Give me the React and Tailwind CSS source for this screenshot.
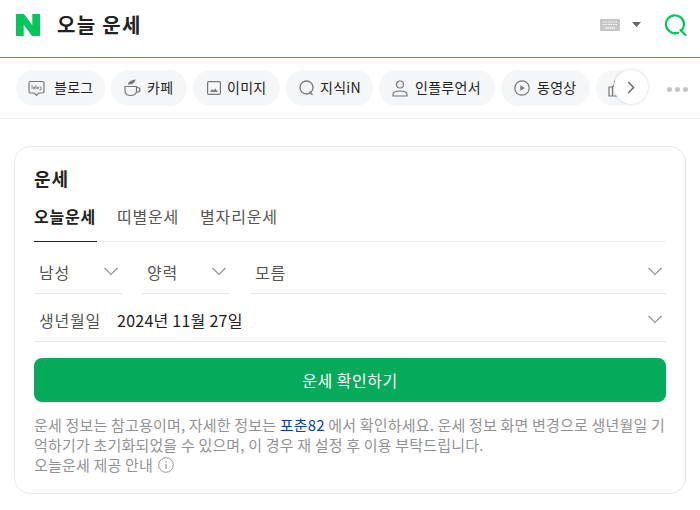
import React from "react";

const font = { fontFamily: '"Noto Sans CJK KR", "Liberation Sans", sans-serif' };

const Chevron = ({ className = "" }) => (
  <svg width="16" height="9" viewBox="0 0 16 9" fill="none" stroke="#8f9297" strokeWidth="1.2" className={className}>
    <path d="M1.5 1 L8 7.5 L14.5 1" />
  </svg>
);

const icons = {
  blog: (
    <svg width="17" height="17" viewBox="0 0 17 17" fill="none" stroke="#777" strokeWidth="1.2">
      <path d="M2.500 1.500h12a1.500 1.500 0 0 1 1.500 1.500v8.500a1.500 1.500 0 0 1-1.500 1.500h-3.700L8.500 15.300 6.200 13H2.500A1.500 1.500 0 0 1 1 11.500V3a1.500 1.500 0 0 1 1.500-1.500z" />
      <path d="M4 5v3.800M5.200 7h1.300v1.800H5.200zM7.800 5v3.800M9 7h1.300v1.800H9zM11.500 7h1.500v3h-1.500" strokeWidth="0.8" />
    </svg>
  ),
  cafe: (
    <svg width="17" height="18" viewBox="0 0 17 18" fill="none" stroke="#777" strokeWidth="1.2">
      <path d="M1 7.500h11.500v4.500a4.500 4.500 0 0 1-4.500 4.500H5.500A4.500 4.500 0 0 1 1 12z" />
      <path d="M12.500 8.500h1.200a2 2 0 0 1 0 4.500h-1.400" />
      <path d="M4 5.500c0-2.500 3-4.500 7.500-5-.3 3-3 5-7.500 5z" fill="#777" stroke="none" />
    </svg>
  ),
  image: (
    <svg width="14" height="14" viewBox="0 0 14 14" fill="none" stroke="#777" strokeWidth="1.200">
      <rect x="0.600" y="0.600" width="12.800" height="12.800" rx="1.200" />
      <path d="M3 11l2.200-3 1.500 1.800 1.500-2.400L11 11z" fill="#777" stroke="none" />
    </svg>
  ),
  kin: (
    <svg width="16" height="16" viewBox="0 0 16 16" fill="none" stroke="#777" strokeWidth="1.300">
      <circle cx="7.500" cy="7.500" r="6.500" />
      <path d="M10.500 11.500l3 3.500" />
    </svg>
  ),
  user: (
    <svg width="16" height="17" viewBox="0 0 16 17" fill="none" stroke="#777" strokeWidth="1.200">
      <circle cx="8" cy="4.500" r="3.500" />
      <path d="M1 16v-1.500c0-2 2-3.500 7-3.500s7 1.500 7 3.500V16z" />
    </svg>
  ),
  video: (
    <svg width="16" height="16" viewBox="0 0 16 16" fill="none" stroke="#777" strokeWidth="1.200">
      <circle cx="8" cy="8" r="7.200" />
      <path d="M6.300 5.200v5.600L10.800 8z" fill="#777" stroke="none" />
    </svg>
  ),
  thumb: (
    <svg width="17" height="17" viewBox="0 0 17 17" fill="none" stroke="#777" strokeWidth="1.200">
      <path d="M1 7h3.500v9H1zM4.500 7L7 4.500V1c1.500 0 2.500 1 2.500 2.500V6.500h5v9a.5.500 0 0 1-.5.500H4.500" />
    </svg>
  ),
};

const pills = [
  { label: "블로그", icon: "blog", cls: "w-[89px] pl-[11px] gap-[9px]" },
  { label: "카페", icon: "cafe", cls: "w-[76px] pl-[12px] gap-[6px]" },
  { label: "이미지", icon: "image", cls: "w-[87px] pl-[12px] gap-[4px]" },
  { label: "지식iN", icon: "kin", cls: "w-[87px] pl-[12px] gap-[4px]" },
  { label: "인플루언서", icon: "user", cls: "w-[116px] pl-[12px] gap-[6px]" },
  { label: "동영상", icon: "video", cls: "w-[89px] pl-[12px] gap-[6px]" },
  { label: "", icon: "thumb", cls: "w-[40px] pl-[11px] gap-[6px]" },
];

export default function App() {
  return (
    <div style={font} className="w-[700px] h-[510px] bg-white overflow-hidden text-[#222]">
      <header className="h-[58px] border-b border-[#1fb85c] flex items-center pl-4 pr-[11px]">
        <svg width="24" height="22" viewBox="0 0 24 22" className="mt-[-7px]">
          <path d="M16.300 0v11.300L8 0H0v22h7.700V10.700L16 22h8V0z" fill="#03c75a" />
        </svg>
        <h1 className="ml-[17px] text-[20px] font-bold leading-none tracking-[1.300px] mt-[-8px]">오늘 운세</h1>
        <div className="ml-auto flex items-center mt-[-8px]">
          <svg width="20" height="12" viewBox="0 0 20 12">
            <rect width="20" height="12" rx="1" fill="#c6c6c6" />
            <path d="M3 3h14M3 5.500h14" stroke="#fff" strokeWidth="1.200" strokeDasharray="1.500 1" />
            <path d="M5 9h10" stroke="#fff" strokeWidth="1.200" />
          </svg>
          <svg width="9" height="5" viewBox="0 0 9 5" className="ml-[12px]">
            <path d="M0 0h9L4.500 5z" fill="#666" />
          </svg>
          <svg width="24" height="24" viewBox="0 0 24 24" fill="none" stroke="#03c75a" strokeWidth="2.200" className="ml-[24px]">
            <path d="M13.300 19.700A9 9 0 1 1 19 11.500c0 2.400-.9 4.500-2.500 6" strokeLinecap="round" />
            <path d="M15.500 17l5 5" strokeLinecap="round" />
            <circle cx="10" cy="20" r="1.200" fill="#03c75a" stroke="none" />
          </svg>
        </div>
      </header>

      <nav className="relative h-[61px] border-b border-[#f0f0f2] pl-4 pt-[12px] overflow-hidden">
        <div className="flex gap-[6px] w-[900px]">
          {pills.map((p) => (
            <div key={p.icon} className={`h-[36px] rounded-full bg-[#f5f6f8] flex items-center text-[14px] tracking-[0.3px] shrink-0 ${p.cls}`}>
              <span className="w-[18px] flex justify-center shrink-0">{icons[p.icon]}</span>
              {p.label && <span className="leading-none mt-[-2px]">{p.label}</span>}
            </div>
          ))}
        </div>
        <div className="absolute left-[614px] top-[12px] w-[34px] h-[34px] rounded-full bg-white shadow-[0_0_3px_rgba(0,0,0,0.2)] flex items-center justify-center">
          <svg width="8" height="13" viewBox="0 0 8 13" fill="none" stroke="#666" strokeWidth="1.400">
            <path d="M1.200 1l5.400 5.500-5.400 5.500" />
          </svg>
        </div>
        <div className="absolute left-[652px] top-0 w-[48px] h-[60px] flex items-center justify-center gap-[3px] pt-[2px] pl-[2px]">
          <i className="w-[5px] h-[5px] rounded-full bg-[#c4c4c4]" />
          <i className="w-[5px] h-[5px] rounded-full bg-[#c4c4c4]" />
          <i className="w-[5px] h-[5px] rounded-full bg-[#c4c4c4]" />
        </div>
      </nav>

      <section className="mx-[14px] mt-[27px] h-[348px] border border-[#e7e9ec] rounded-[16px] px-[19px]">
        <h2 className="text-[18px] font-bold leading-[26px] mt-[18px] tracking-[1px]">운세</h2>
        <div className="flex mt-[14px] h-[37px] border-b border-[#eceef0] text-[16px] tracking-[0.8px] leading-[22px] text-[#555]">
          <div className="w-[63px] h-[37px] border-b border-[#222] font-bold text-[#222] shrink-0 mr-[20px] whitespace-nowrap">오늘운세</div>
          <div className="mr-[21px]">띠별운세</div>
          <div>별자리운세</div>
        </div>

        <div className="flex gap-[20px] mt-[8px] text-[16px] tracking-[0.8px] text-[#555]">
          <div className="w-[88px] h-[44px] border-b border-[#e7e9ec] flex items-center justify-between pl-[5px] pr-[3px]">
            <span>남성</span><Chevron />
          </div>
          <div className="w-[88px] h-[44px] border-b border-[#e7e9ec] flex items-center justify-between pl-[5px] pr-[3px]">
            <span>양력</span><Chevron />
          </div>
          <div className="flex-1 h-[44px] border-b border-[#e7e9ec] flex items-center justify-between pl-[5px] pr-[3px]">
            <span>모름</span><Chevron />
          </div>
        </div>

        <div className="h-[48px] border-b border-[#e7e9ec] flex items-center pt-[4px] pl-[5px] pr-[3px] text-[16px]">
          <span className="text-[#555] w-[78px] shrink-0 tracking-[0.8px]">생년월일</span>
          <span className="tracking-[0.25px]">2024년 11월 27일</span>
          <Chevron className="ml-auto" />
        </div>

        <button className="w-full h-[44px] mt-[16px] rounded-[8px] bg-[#05aa5b] text-white text-[16px] tracking-[0.5px] block">운세 확인하기</button>

        <div className="mt-[13px] text-[15px] tracking-[0.18px] leading-[20px] text-[#929294] break-all">
          <p>운세 정보는 참고용이며, 자세한 정보는 <span className="text-[#0042b8]">포춘82</span> 에서 확인하세요. 운세 정보 화면 변경으로 생년월일 기억하기가 초기화되었을 수 있으며, 이 경우 재 설정 후 이용 부탁드립니다.</p>
          <p className="flex items-center gap-[5px]">
            오늘운세 제공 안내
            <svg width="16" height="16" viewBox="0 0 16 16" fill="none" stroke="#999" strokeWidth="1">
              <circle cx="8" cy="8" r="7.300" />
              <path d="M8 7v5M8 4v1.500" strokeWidth="1.200" />
            </svg>
          </p>
        </div>
      </section>
    </div>
  );
}
